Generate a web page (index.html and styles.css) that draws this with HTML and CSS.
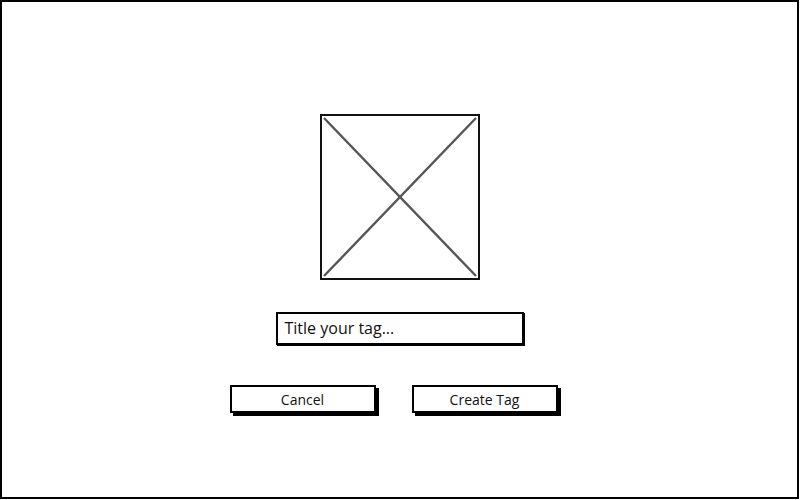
FILE: index.html
```html
<!DOCTYPE html>
<html>
<head>
    <title>Create Tag</title>
    <meta charset="utf-8" />
    <link rel="stylesheet" href="styles.css">
</head>
<body>
    <div class="frame">
        <!-- image placeholder -->
        <div class="imageBox">
            <svg width="156" height="162" viewBox="0 0 156 162">
                <line x1="2" y1="2" x2="154" y2="160" stroke="#555" stroke-width="2.4" />
                <line x1="154" y1="2" x2="2" y2="160" stroke="#555" stroke-width="2.4" />
            </svg>
        </div>

        <!-- tag title -->
        <div class="titleInput">Title your tag...</div>

        <!-- actions -->
        <div class="buttonRow">
            <div class="btn">Cancel</div>
            <div class="btn">Create Tag</div>
        </div>
    </div>
</body>
</html>
```

FILE: styles.css
```css
html, body {
    margin:0;
    padding:0;
    background:#fff;
    font-family:"Open Sans", "Liberation Sans", sans-serif;
    color:#111;
}

/*** whole window outline ***/
.frame {
    box-sizing:border-box;
    width:799px;
    height:499px;
    border:2px solid #000;
    display:flex;
    flex-direction:column;
    align-items:center;
    padding-top:112px;
}

/*** crossed box image placeholder ***/
.imageBox {
    width:156px;
    height:162px;
    border:2px solid #111;
}
.imageBox svg { display:block; }

/*** text input ***/
.titleInput {
    box-sizing:border-box;
    width:248px;
    height:33px;
    margin-top:32px;
    border:2px solid #000;
    box-shadow:1px 1px 0 #000;
    padding:0 0 0 7px;
    font-size:16px;
    line-height:28px;
    text-align:left;
}

/*** buttons ***/
.buttonRow {
    display:flex;
    gap:36px;
    margin-top:40px;
    margin-right:12px;
}
.btn {
    box-sizing:border-box;
    width:146px;
    height:28px;
    border:2px solid #000;
    box-shadow:3px 3px 0 #000;
    font-size:14px;
    line-height:26px;
    text-align:center;
}
```
